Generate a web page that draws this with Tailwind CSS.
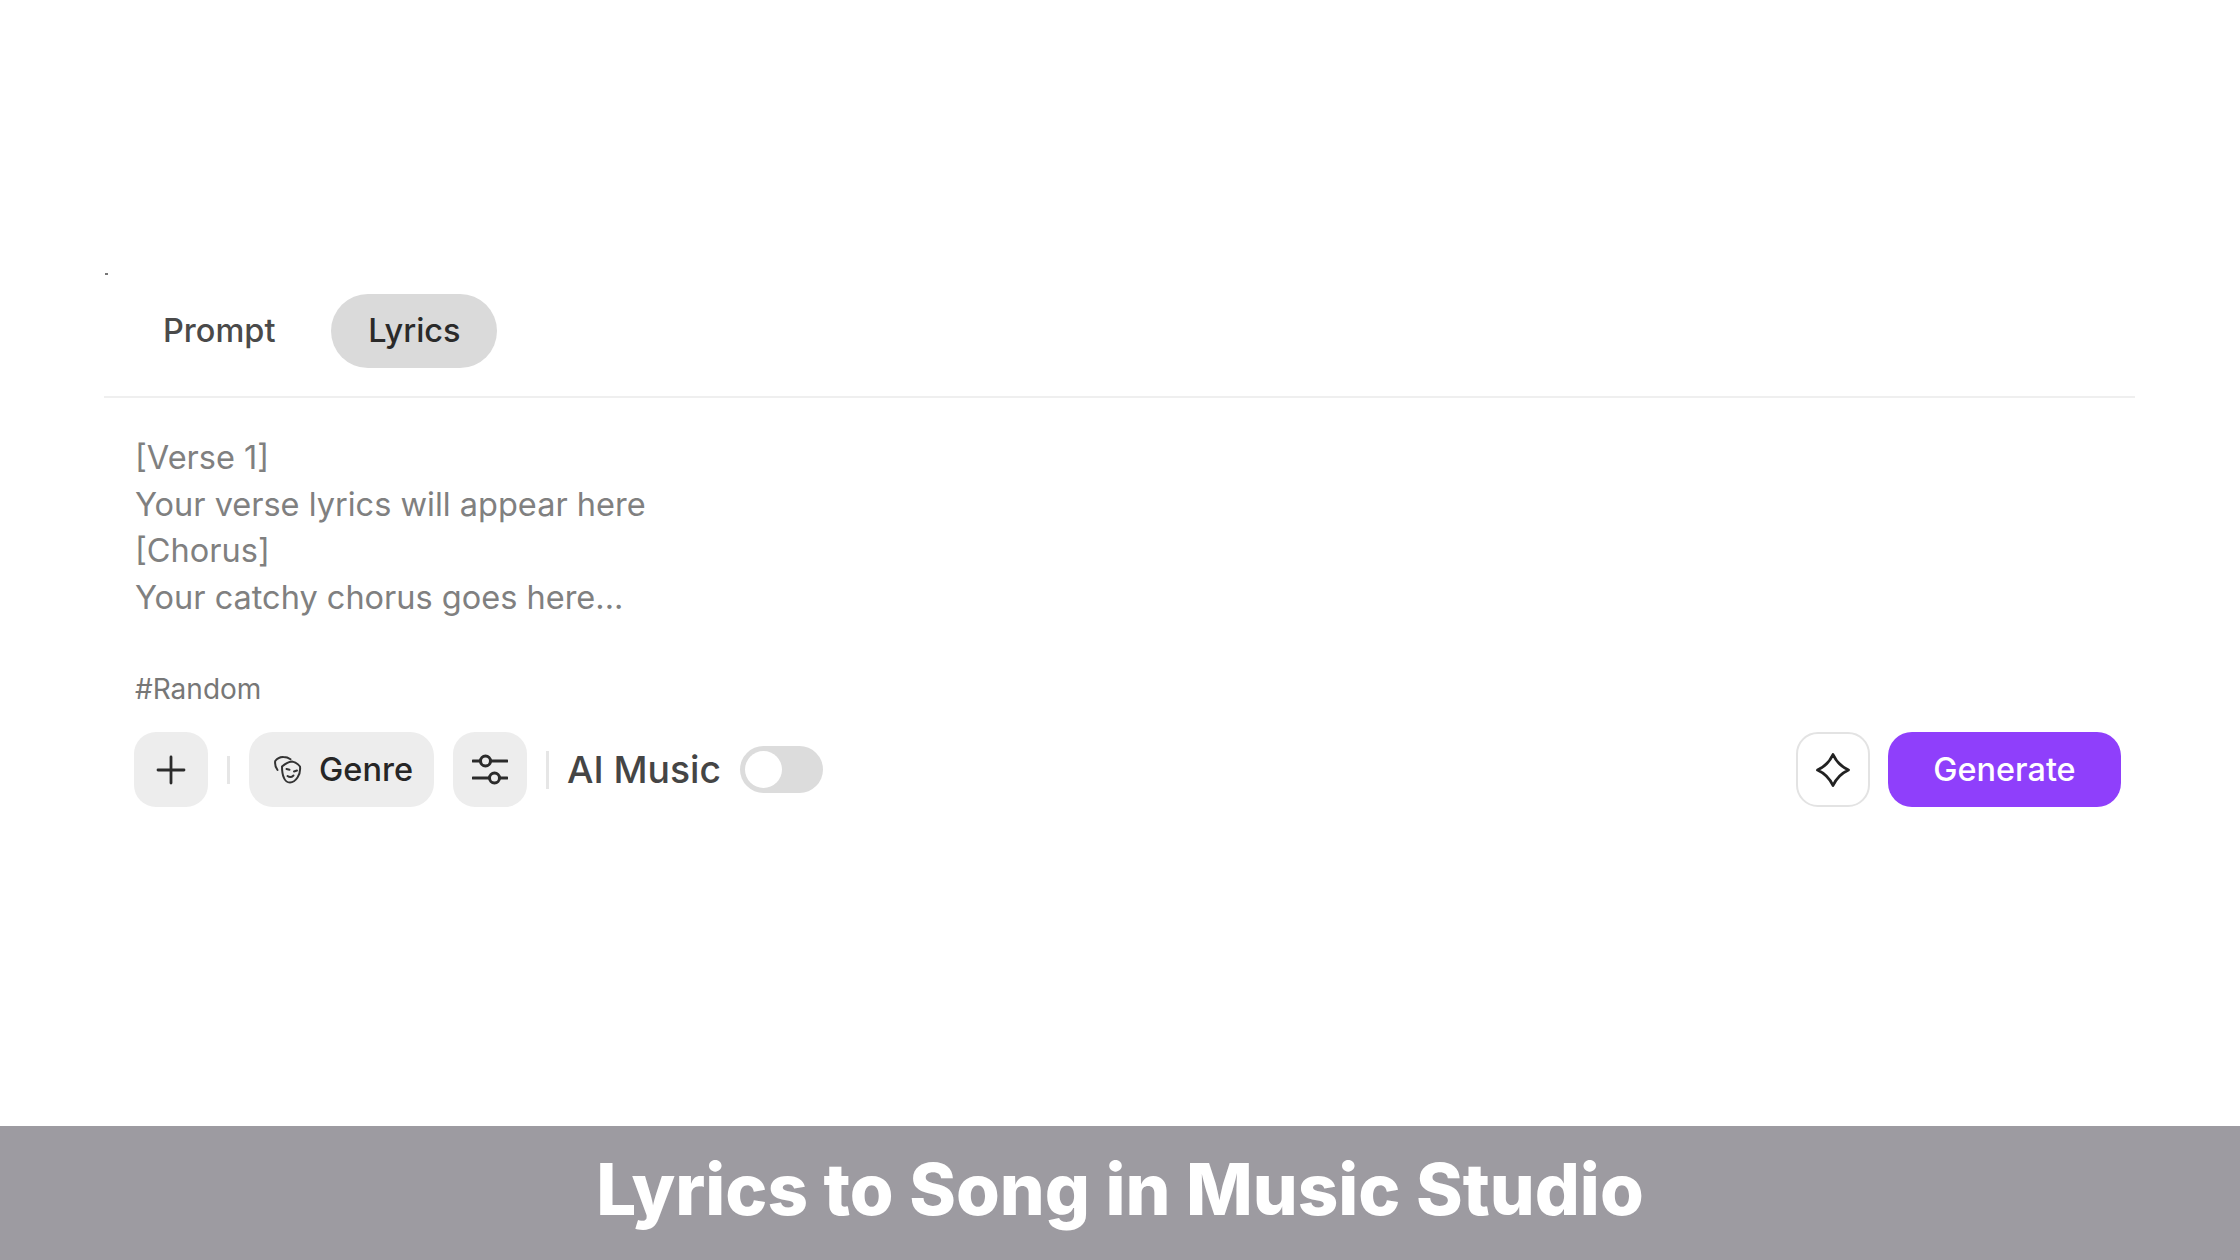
<!DOCTYPE html>
<html lang="en">
<head>
    <meta charset="UTF-8">
    <title>Lyrics to Song in Music Studio</title>
    <script src="https://cdn.jsdelivr.net/npm/@tailwindcss/browser@4"></script>
</head>
<body class="relative bg-white font-['Inter',sans-serif] w-[2240px] h-[1260px] overflow-hidden flex flex-col">
    <!-- stray speck in the capture -->
    <span class="absolute left-[105px] top-[273px] w-[3px] h-[2px] bg-[#777777]"></span>

    <main class="flex-1 pt-[294px] pl-[104px] pr-[105px]">
        <!-- tabs -->
        <div class="flex items-start h-[104px] border-b-2 border-[#efefef] pl-[26px] gap-[23px]">
            <button class="h-[74px] px-[33px] rounded-full text-[32.5px] font-medium text-[#4a4a4a]">Prompt</button>
            <button class="h-[74px] w-[166px] rounded-full text-[32.5px] font-medium text-[#2a2a2a] bg-[#dadada]">Lyrics</button>
        </div>

        <!-- placeholder -->
        <div class="pl-[31px] pt-[37px] text-[32.5px] leading-[46.6px] text-[#808080]">
            <p>[Verse 1]</p>
            <p>Your verse lyrics will appear here</p>
            <p>[Chorus]</p>
            <p>Your catchy chorus goes here...</p>
        </div>
        <p class="pl-[31px] mt-[49px] text-[28px] leading-[38px] text-[#777777]">#Random</p>

        <!-- toolbar -->
        <div class="flex items-center mt-[24px] pl-[30px] pr-[14px] h-[75px]">
            <button class="w-[74px] h-[75px] rounded-[22px] bg-[#ededed] flex items-center justify-center">
                <svg class="w-[30px] h-[30px]" viewBox="0 0 30 30" fill="none" stroke="#2b2b2b" stroke-width="2.8" stroke-linecap="round"><path d="M15 2v26M2 15h26"/></svg>
            </button>
            <span class="w-[3px] h-[28px] bg-[#e6e6e6] ml-[19px]"></span>
            <button class="ml-[19px] w-[185px] h-[75px] rounded-[24px] bg-[#ededed] flex items-center pl-[25px] gap-[17px] text-[32.5px] font-medium text-[#262626]">
                <svg class="w-[28px] h-[28px]" viewBox="0 0 28 28" fill="none" stroke="#333333" stroke-width="2" stroke-linecap="round" stroke-linejoin="round">
                    <path d="M3.5 14C1.500 11.500 .8 8 1.200 5 3.500 2 6.500 .9 9.500 1c2.500 0 5 .8 7 2.200"/>
                    <path d="M8 10.500C11 8 14.500 5.500 18 5.500c3 .5 6 2.500 8 5 .5 4-.5 8-2.500 11-1.800 2.700-4.500 5-7.500 5s-5-2-6-4.500C8.500 19 8 15 8 10.500z"/>
                    <path d="M12.500 13l3 .8M20 15.500l3-1M13.500 20c2 1.500 4.500 1 6-.5"/>
                </svg>
                Genre
            </button>
            <button class="ml-[19px] w-[74px] h-[75px] rounded-[22px] bg-[#ededed] flex items-center justify-center">
                <svg class="w-[36px] h-[32px]" viewBox="0 0 36 32" fill="none" stroke="#2b2b2b" stroke-width="3" stroke-linecap="round">
                    <path d="M1 7h7M19 7h16M1 24h16M28 24h7"/>
                    <circle cx="13.500" cy="7" r="5"/>
                    <circle cx="22.500" cy="24" r="5"/>
                </svg>
            </button>
            <span class="w-[3px] h-[38px] bg-[#e6e6e6] ml-[19px]"></span>
            <span class="ml-[18px] text-[37.3px] font-medium text-[#454545]">AI Music</span>
            <span class="ml-[19px] w-[83px] h-[47px] rounded-full bg-[#dcdcdc] flex items-center pl-[5px]">
                <span class="w-[37px] h-[37px] rounded-full bg-white"></span>
            </span>
            <button class="ml-auto w-[74px] h-[75px] rounded-[22px] bg-white border-2 border-[#e3e3e3] flex items-center justify-center">
                <svg class="w-[36px] h-[36px]" viewBox="0 0 36 36" fill="none" stroke="#222222" stroke-width="2.8" stroke-linejoin="round"><path d="M18 2.500C21 9 27 15 33.500 18 27 21 21 27 18 33.500 15 27 9 21 2.500 18 9 15 15 9 18 2.500z"/></svg>
            </button>
            <button class="ml-[18px] w-[233px] h-[75px] rounded-[24px] bg-[#8f3ffb] text-white text-[32.4px] font-medium">Generate</button>
        </div>
    </main>

    <!-- caption bar -->
    <footer class="h-[134px] bg-[#9d9ba1] flex items-center justify-center pb-[8px]">
        <h1 class="text-white font-extrabold text-[70.8px] leading-none">Lyrics to Song in Music Studio</h1>
    </footer>
</body>
</html>
